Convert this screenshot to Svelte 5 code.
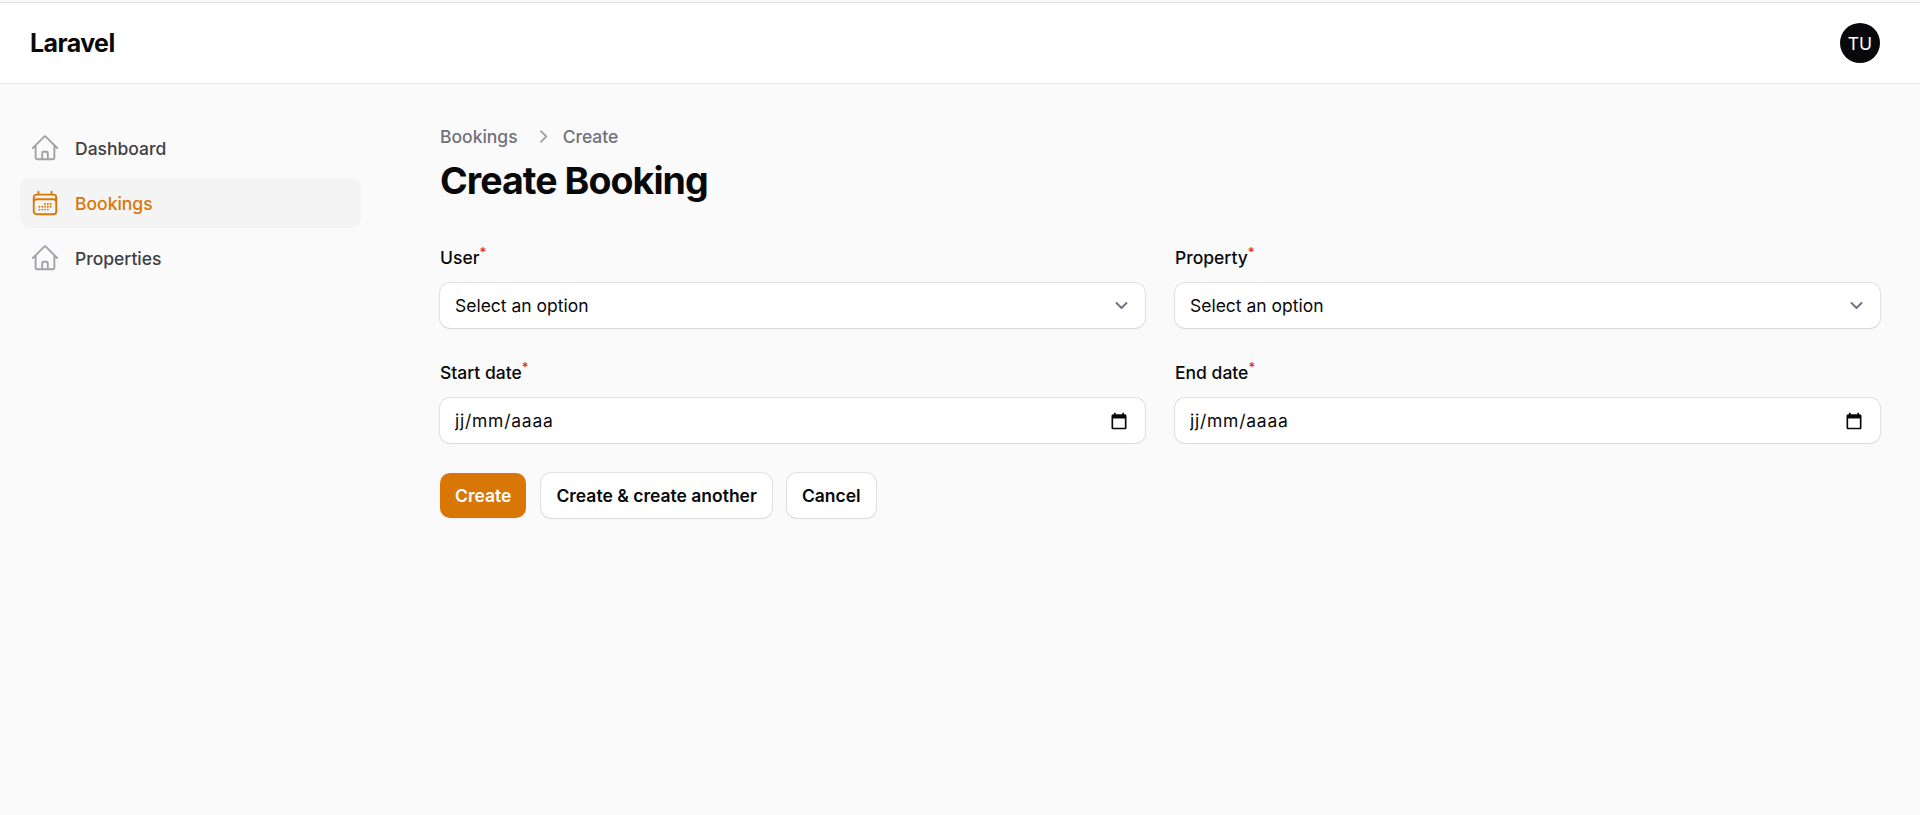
<script>
  const navItems = [
    { label: "Dashboard", icon: "home" },
    { label: "Bookings", icon: "calendar", active: true },
    { label: "Properties", icon: "home" },
  ];

  const homePath = "m2.25 12 8.954-8.955c.44-.439 1.152-.439 1.591 0L21.75 12M4.5 9.75v10.125c0 .621.504 1.125 1.125 1.125H9.75v-4.875c0-.621.504-1.125 1.125-1.125h2.25c.621 0 1.125.504 1.125 1.125V21h4.125c.621 0 1.125-.504 1.125-1.125V9.75M8.25 21h8.25";
  const calendarPath = "M6.75 3v2.25M17.25 3v2.25M3 18.75V7.5a2.25 2.25 0 0 1 2.25-2.25h13.5A2.25 2.25 0 0 1 21 7.5v11.25m-18 0A2.25 2.25 0 0 0 5.25 21h13.5A2.25 2.25 0 0 0 21 18.75m-18 0v-7.5A2.25 2.25 0 0 1 5.25 9h13.5A2.25 2.25 0 0 1 21 11.25v7.5m-9-6h.008v.008H12v-.008ZM12 15h.008v.008H12V15Zm0 2.25h.008v.008H12v-.008ZM9.75 15h.008v.008H9.75V15Zm0 2.25h.008v.008H9.75v-.008ZM7.5 15h.008v.008H7.5V15Zm0 2.25h.008v.008H7.5v-.008Zm6.75-4.5h.008v.008h-.008v-.008Zm0 2.25h.008v.008h-.008V15Zm0 2.25h.008v.008h-.008v-.008Zm2.25-4.5h.008v.008H16.5v-.008Zm0 2.25h.008v.008H16.5V15Z";
</script>

<div class="page">
  <header class="topbar">
    <span class="logo">Laravel</span>
    <span class="avatar">TU</span>
  </header>

  <div class="layout">
    <nav class="sidebar">
      {#each navItems as item}
        <a class="nav-item" class:active={item.active} href="#top">
          <svg class="nav-icon" viewBox="0 0 24 24" fill="none" stroke="currentColor" stroke-width="1.5" stroke-linecap="round" stroke-linejoin="round">
            <path d={item.icon === "home" ? homePath : calendarPath} />
          </svg>
          <span>{item.label}</span>
        </a>
      {/each}
    </nav>

    <main class="content">
      <div class="breadcrumbs">
        <span>Bookings</span>
        <svg class="crumb-sep" viewBox="0 0 20 20" fill="currentColor">
          <path fill-rule="evenodd" clip-rule="evenodd" d="M8.22 5.22a.75.75 0 0 1 1.06 0l4.25 4.25a.75.75 0 0 1 0 1.06l-4.25 4.25a.75.75 0 0 1-1.06-1.06L11.94 10 8.22 6.28a.75.75 0 0 1 0-1.06Z" />
        </svg>
        <span>Create</span>
      </div>
      <h1>Create Booking</h1>

      <form class="form-grid">
        <div class="field">
          <label for="user">User<sup>*</sup></label>
          <div class="control">
            <select id="user"><option>Select an option</option></select>
            <svg class="chevron" viewBox="0 0 20 20" fill="none" stroke="currentColor" stroke-width="1.5" stroke-linecap="round" stroke-linejoin="round"><path d="m6 8 4 4 4-4" /></svg>
          </div>
        </div>
        <div class="field">
          <label for="property">Property<sup>*</sup></label>
          <div class="control">
            <select id="property"><option>Select an option</option></select>
            <svg class="chevron" viewBox="0 0 20 20" fill="none" stroke="currentColor" stroke-width="1.5" stroke-linecap="round" stroke-linejoin="round"><path d="m6 8 4 4 4-4" /></svg>
          </div>
        </div>
        <div class="field">
          <label for="start">Start date<sup>*</sup></label>
          <div class="control">
            <input id="start" class="date" type="text" value="jj/mm/aaaa" />
            <svg class="cal" viewBox="0 0 24 24" fill="currentColor"><path d="M19 4h-1V2h-2v2H8V2H6v2H5c-1.1 0-2 .9-2 2v14c0 1.1.9 2 2 2h14c1.1 0 2-.9 2-2V6c0-1.1-.9-2-2-2Zm0 16H5V9h14v11Z" /></svg>
          </div>
        </div>
        <div class="field">
          <label for="end">End date<sup>*</sup></label>
          <div class="control">
            <input id="end" class="date" type="text" value="jj/mm/aaaa" />
            <svg class="cal" viewBox="0 0 24 24" fill="currentColor"><path d="M19 4h-1V2h-2v2H8V2H6v2H5c-1.1 0-2 .9-2 2v14c0 1.1.9 2 2 2h14c1.1 0 2-.9 2-2V6c0-1.1-.9-2-2-2Zm0 16H5V9h14v11Z" /></svg>
          </div>
        </div>
      </form>

      <div class="actions">
        <button type="button" class="btn primary">Create</button>
        <button type="button" class="btn">Create &amp; create another</button>
        <button type="button" class="btn">Cancel</button>
      </div>
    </main>
  </div>
</div>

<style>
  :global(body) {
    background: #fafafa;
    font-family: Inter, "Liberation Sans", sans-serif;
  }

  .page {
    min-height: 815px;
    padding-top: 2px;
    box-sizing: border-box;
  }

  .topbar {
    display: flex;
    align-items: center;
    justify-content: space-between;
    height: 82px;
    box-sizing: border-box;
    padding: 0 40px 0 30px;
    background: #fff;
    border-top: 1px solid #e4e4e7;
    border-bottom: 1px solid #e4e4e7;
  }

  .logo {
    font-size: 25px;
    font-weight: 700;
    letter-spacing: -0.6px;
    color: #09090b;
  }

  .avatar {
    display: flex;
    align-items: center;
    justify-content: center;
    width: 40px;
    height: 40px;
    border-radius: 50%;
    background: #09090b;
    color: #fff;
    font-size: 17.5px;
  }

  .layout {
    display: flex;
  }

  .sidebar {
    flex: 0 0 400px;
    box-sizing: border-box;
    padding: 39px 39px 0 20px;
    display: flex;
    flex-direction: column;
    gap: 5px;
  }

  .nav-item {
    display: flex;
    align-items: center;
    gap: 15px;
    height: 50px;
    padding: 0 10px;
    border-radius: 10px;
    font-size: 17.5px;
    font-weight: 500;
    color: #3f3f46;
    text-decoration: none;
  }

  .nav-item .nav-icon {
    color: #a1a1aa;
  }

  .nav-item.active {
    background: #f4f4f5;
    color: #d97706;
  }

  .nav-item.active .nav-icon {
    color: #d97706;
  }

  .nav-icon {
    width: 30px;
    height: 30px;
    flex: none;
  }

  .content {
    flex: 1;
    min-width: 0;
    padding: 40px 40px 0;
  }

  .breadcrumbs {
    display: flex;
    align-items: center;
    gap: 15px;
    font-size: 17.5px;
    line-height: 25px;
    font-weight: 500;
    color: #71717a;
  }

  .crumb-sep {
    width: 25px;
    height: 25px;
    color: #a1a1aa;
    margin: 0 -7px 0 -3px;
  }

  h1 {
    margin: 9px 0 0;
    font-size: 37.5px;
    line-height: 45px;
    font-weight: 700;
    letter-spacing: -0.94px;
    color: #09090b;
  }

  .form-grid {
    display: grid;
    grid-template-columns: 1fr 1fr;
    gap: 32px 30px;
    margin-top: 42px;
  }

  .field {
    display: flex;
    flex-direction: column;
    gap: 13px;
  }

  label {
    font-size: 17.5px;
    line-height: 25px;
    font-weight: 500;
    color: #09090b;
  }

  sup {
    color: #dc2626;
    font-size: 13px;
    line-height: 0;
    font-weight: 500;
  }

  .control {
    position: relative;
    height: 45px;
    border-radius: 10px;
    background: #fff;
    box-shadow: 0 1px 2px rgba(0, 0, 0, 0.05), 0 0 0 1px #e4e4e7;
  }

  select,
  input {
    display: block;
    width: 100%;
    height: 100%;
    box-sizing: border-box;
    padding: 0 15px;
    border: 0;
    outline: 0;
    background: transparent;
    font-family: inherit;
    font-size: 17.5px;
    color: #09090b;
    appearance: none;
  }

  input.date {
    letter-spacing: 0.75px;
  }

  .chevron {
    position: absolute;
    right: 11.5px;
    top: 10px;
    width: 25px;
    height: 25px;
    color: #6b7280;
    pointer-events: none;
  }

  .cal {
    position: absolute;
    right: 16px;
    top: 12.5px;
    width: 20px;
    height: 20px;
    color: #09090b;
    pointer-events: none;
  }

  .actions {
    display: flex;
    gap: 15px;
    margin-top: 30px;
  }

  .btn {
    height: 45px;
    padding: 0 15px;
    border: 0;
    border-radius: 10px;
    background: #fff;
    box-shadow: 0 1px 2px rgba(0, 0, 0, 0.05), 0 0 0 1px #e4e4e7;
    font-family: inherit;
    font-size: 17.5px;
    font-weight: 600;
    color: #09090b;
  }

  .btn.primary {
    background: #d97706;
    color: #fff;
    box-shadow: 0 1px 2px rgba(0, 0, 0, 0.05);
  }
</style>
